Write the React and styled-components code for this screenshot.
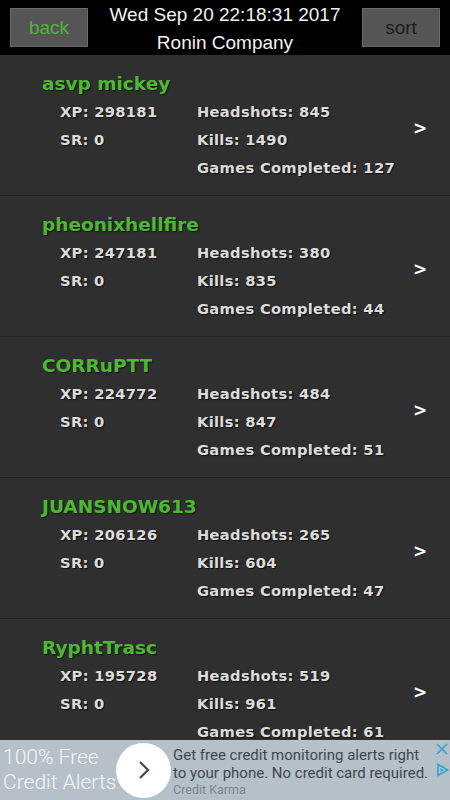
import React from 'react';
import styled, { createGlobalStyle } from 'styled-components';

const GlobalStyle = createGlobalStyle`
  html, body {
    margin: 0;
    padding: 0;
    background: #2f2f2f;
  }
  #root {
    min-height: 800px;
  }
`;

const Page = styled.div`
  width: 450px;
  height: 800px;
  overflow: hidden;
  position: relative;
  background: #2f2f2f;
`;

const Header = styled.div`
  height: 55px;
  background: #000;
  display: flex;
  align-items: flex-start;
  justify-content: space-between;
  padding: 8px 10px 0;
  box-sizing: border-box;
`;

const HeadButton = styled.button`
  width: 78px;
  height: 39px;
  background: #555;
  border: 1px solid #6a6a6a;
  border-radius: 0;
  color: ${p => p.$green ? '#4cb532' : '#1c1c1c'};
  font: 19px "Liberation Sans", Arial, sans-serif;
  padding: 0;
`;

const Title = styled.div`
  color: #f2f2f2;
  font: 19px "Liberation Sans", Arial, sans-serif;
  text-align: center;
  line-height: 28px;
  margin-top: -7px;
`;

const Row = styled.div`
  height: 140px;
  border-bottom: 1px solid #232323;
  display: flex;
  align-items: center;
  position: relative;
  box-sizing: content-box;
`;

const RowBody = styled.div`
  flex: 1;
  padding: 15px 0 0 42px;
  align-self: flex-start;
`;

const Name = styled.div`
  color: #4db833;
  font: bold 18.5px "DejaVu Sans", Verdana, sans-serif;
  line-height: 28px;
  text-shadow: 1px 1px 1px #151515;
`;

const Stats = styled.div`
  display: grid;
  grid-template-columns: 137px 1fr;
  padding-left: 18px;
`;

const Stat = styled.div`
  color: #dcdcdc;
  font: bold 14.7px "DejaVu Sans", Verdana, sans-serif;
  line-height: 28px;
  letter-spacing: 0.3px;
  text-shadow: 1px 1px 1px #111;
  white-space: nowrap;
`;

const Chevron = styled.div`
  color: #fff;
  font: bold 17px "DejaVu Sans", Verdana, sans-serif;
  width: 40px;
  margin-right: 10px;
  text-align: center;
  margin-top: 6px;
`;

const Ad = styled.div`
  position: absolute;
  left: 0;
  right: 0;
  bottom: 0;
  height: 60px;
  background: #b6c0c8;
  display: flex;
  align-items: center;
  font-family: Roboto, "Liberation Sans", sans-serif;
`;

const AdLeft = styled.div`
  color: #f4f6f8;
  font-size: 21px;
  font-weight: 300;
  line-height: 25px;
  padding-left: 3px;
  width: 113px;
  white-space: nowrap;
`;

const Circle = styled.div`
  width: 55px;
  height: 55px;
  border-radius: 50%;
  background: #fff;
  display: flex;
  align-items: center;
  justify-content: center;
  flex-shrink: 0;
`;

const AdText = styled.div`
  color: #3f474d;
  font-size: 15px;
  line-height: 18px;
  white-space: nowrap;
  margin-top: 2px;
  margin-left: 2px;
`;

const Sponsor = styled.div`
  color: #7e868c;
  font-size: 12.5px;
  line-height: 15px;
`;

const AdIcons = styled.div`
  position: absolute;
  right: 0;
  top: 0;
  width: 16px;
  display: flex;
  flex-direction: column;
  align-items: center;
  gap: 8px;
  padding-top: 3px;
  background: #b6c0c8;
`;

const players = [
  { name: 'asvp mickey', xp: 298181, hs: 845, kills: 1490, games: 127 },
  { name: 'pheonixhellfire', xp: 247181, hs: 380, kills: 835, games: 44 },
  { name: 'CORRuPTT', xp: 224772, hs: 484, kills: 847, games: 51 },
  { name: 'JUANSNOW613', xp: 206126, hs: 265, kills: 604, games: 47 },
  { name: 'RyphtTrasc', xp: 195728, hs: 519, kills: 961, games: 61 },
];

export default function App() {
  return (
    <Page>
      <GlobalStyle />
      <Header>
        <HeadButton $green>back</HeadButton>
        <Title>
          <div>Wed Sep 20 22:18:31 2017</div>
          <div>Ronin Company</div>
        </Title>
        <HeadButton>sort</HeadButton>
      </Header>
      {players.map(p => (
        <Row key={p.name}>
          <RowBody>
            <Name>{p.name}</Name>
            <Stats>
              <Stat>XP: {p.xp}</Stat>
              <Stat>Headshots: {p.hs}</Stat>
              <Stat>SR: 0</Stat>
              <Stat>Kills: {p.kills}</Stat>
              <Stat />
              <Stat>Games Completed: {p.games}</Stat>
            </Stats>
          </RowBody>
          <Chevron>&gt;</Chevron>
        </Row>
      ))}
      <Ad>
        <AdLeft>100% Free<br />Credit Alerts</AdLeft>
        <Circle>
          <svg width="14" height="22" viewBox="0 0 14 22">
            <path d="M3 3 L11 11 L3 19" fill="none" stroke="#3f4a55" strokeWidth="2.2" />
          </svg>
        </Circle>
        <AdText>
          Get free credit monitoring alerts right<br />
          to your phone. No credit card required.
          <Sponsor>Credit Karma</Sponsor>
        </AdText>
        <AdIcons>
          <svg width="12" height="12" viewBox="0 0 12 12">
            <path d="M1 1 L11 11 M11 1 L1 11" stroke="#2aa3dc" strokeWidth="1.6" />
          </svg>
          <svg width="13" height="14" viewBox="0 0 13 14">
            <path d="M2 1.5 L12 7 L2 12.5 Z" fill="none" stroke="#2aa3dc" strokeWidth="1.6" />
            <path d="M4.5 5 L8 7 L4.5 9 Z" fill="#2aa3dc" />
          </svg>
        </AdIcons>
      </Ad>
    </Page>
  );
}
